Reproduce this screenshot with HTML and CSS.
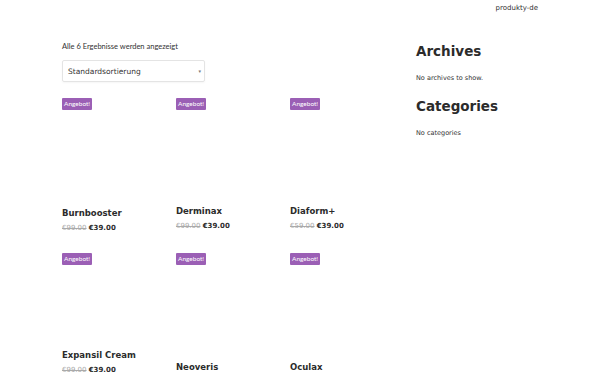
FILE: index.html
```html
<!DOCTYPE html>
<html lang="de">
<head>
<meta charset="utf-8">
<title>produkty-de</title>
<link rel="stylesheet" href="styles.css">
</head>
<body>
<header class="site-header">
  <span class="site-title">produkty-de</span>
</header>
<div class="layout">
  <main class="shop">
    <p class="result-count">Alle 6 Ergebnisse werden angezeigt</p>
    <div class="ordering">
      <span class="ordering-label">Standardsortierung</span>
      <span class="ordering-arrow">▾</span>
    </div>
    <ul class="products">
      <li class="product">
        <div class="thumb thumb-a"><span class="onsale">Angebot!</span></div>
        <h2 class="product-title">Burnbooster</h2>
        <p class="price"><del>€99.00</del> <ins>€39.00</ins></p>
      </li>
      <li class="product">
        <div class="thumb thumb-b"><span class="onsale">Angebot!</span></div>
        <h2 class="product-title">Derminax</h2>
        <p class="price"><del>€99.00</del> <ins>€39.00</ins></p>
      </li>
      <li class="product">
        <div class="thumb thumb-b"><span class="onsale">Angebot!</span></div>
        <h2 class="product-title">Diaform+</h2>
        <p class="price"><del>€59.00</del> <ins>€39.00</ins></p>
      </li>
      <li class="product">
        <div class="thumb thumb-c"><span class="onsale">Angebot!</span></div>
        <h2 class="product-title">Expansil Cream</h2>
        <p class="price"><del>€99.00</del> <ins>€39.00</ins></p>
      </li>
      <li class="product">
        <div class="thumb thumb-d"><span class="onsale">Angebot!</span></div>
        <h2 class="product-title">Neoveris</h2>
      </li>
      <li class="product">
        <div class="thumb thumb-d"><span class="onsale">Angebot!</span></div>
        <h2 class="product-title">Oculax</h2>
      </li>
    </ul>
  </main>
  <aside class="sidebar">
    <section class="widget">
      <h2 class="widget-title">Archives</h2>
      <p class="widget-text">No archives to show.</p>
    </section>
    <section class="widget">
      <h2 class="widget-title">Categories</h2>
      <p class="widget-text">No categories</p>
    </section>
  </aside>
</div>
</body>
</html>
```
FILE: styles.css
```css
* { box-sizing: border-box; }
html, body { margin: 0; padding: 0; background: #fff; overflow: hidden; }
body {
  width: 600px;
  height: 375px;
  font-family: "DejaVu Sans", sans-serif;
  color: #2b2b2b;
}
.site-header {
  height: 18px;
  display: flex;
  justify-content: flex-end;
  padding: 3px 62px 0 0;
}
.site-title {
  font-size: 7px;
  line-height: 10px;
  color: #333;
}
.layout {
  display: flex;
  padding: 0 0 0 62px;
  gap: 26px;
}
.shop { width: 328px; flex: none; }
.result-count {
  margin: 24px 0 0;
  font-family: "Lato", "Open Sans", sans-serif;
  font-size: 7.5px;
  line-height: 10px;
  color: #333;
}
.ordering {
  margin-top: 8px;
  width: 143px;
  height: 22px;
  border: 1px solid #e4e4e4;
  border-radius: 2px;
  display: flex;
  align-items: center;
  justify-content: space-between;
  padding: 0 3px 0 5px;
  box-shadow: 0 1px 2px rgba(0,0,0,0.04);
}
.ordering-label { font-size: 7.5px; color: #333; }
.ordering-arrow { font-size: 5px; color: #777; }
.products {
  list-style: none;
  margin: 16px 0 0;
  padding: 0;
  display: grid;
  grid-template-columns: repeat(3, 100px);
  column-gap: 14px;
  row-gap: 0;
  grid-auto-rows: 155px;
}
.product { display: flex; flex-direction: column; }
.thumb { position: relative; }
.thumb-a { height: 109px; }
.thumb-b { height: 107px; }
.thumb-c { height: 96px; }
.thumb-d { height: 108px; }
.onsale {
  position: absolute;
  top: 0;
  left: 0;
  background: #9b5fb5;
  color: #fff;
  font-family: "Lato", "Open Sans", sans-serif;
  font-size: 6.5px;
  line-height: 12px;
  padding: 0 2px;
  border-radius: 1px;
}
.product-title {
  margin: 0;
  font-size: 8.5px;
  line-height: 12px;
  font-weight: bold;
  color: #2b2b2b;
}
.price {
  margin: 4px 0 0;
  font-size: 7px;
  line-height: 10px;
}
.price del { color: #aaa; }
.price ins { text-decoration: none; font-weight: bold; color: #2b2b2b; }
.sidebar { width: 160px; flex: none; padding-top: 24px; }
.widget-title {
  margin: 0;
  font-size: 13.5px;
  line-height: 18px;
  font-weight: bold;
  color: #2b2b2b;
}
.widget-text {
  margin: 13px 0 14px;
  font-size: 6.5px;
  line-height: 10px;
  color: #333;
}
```
